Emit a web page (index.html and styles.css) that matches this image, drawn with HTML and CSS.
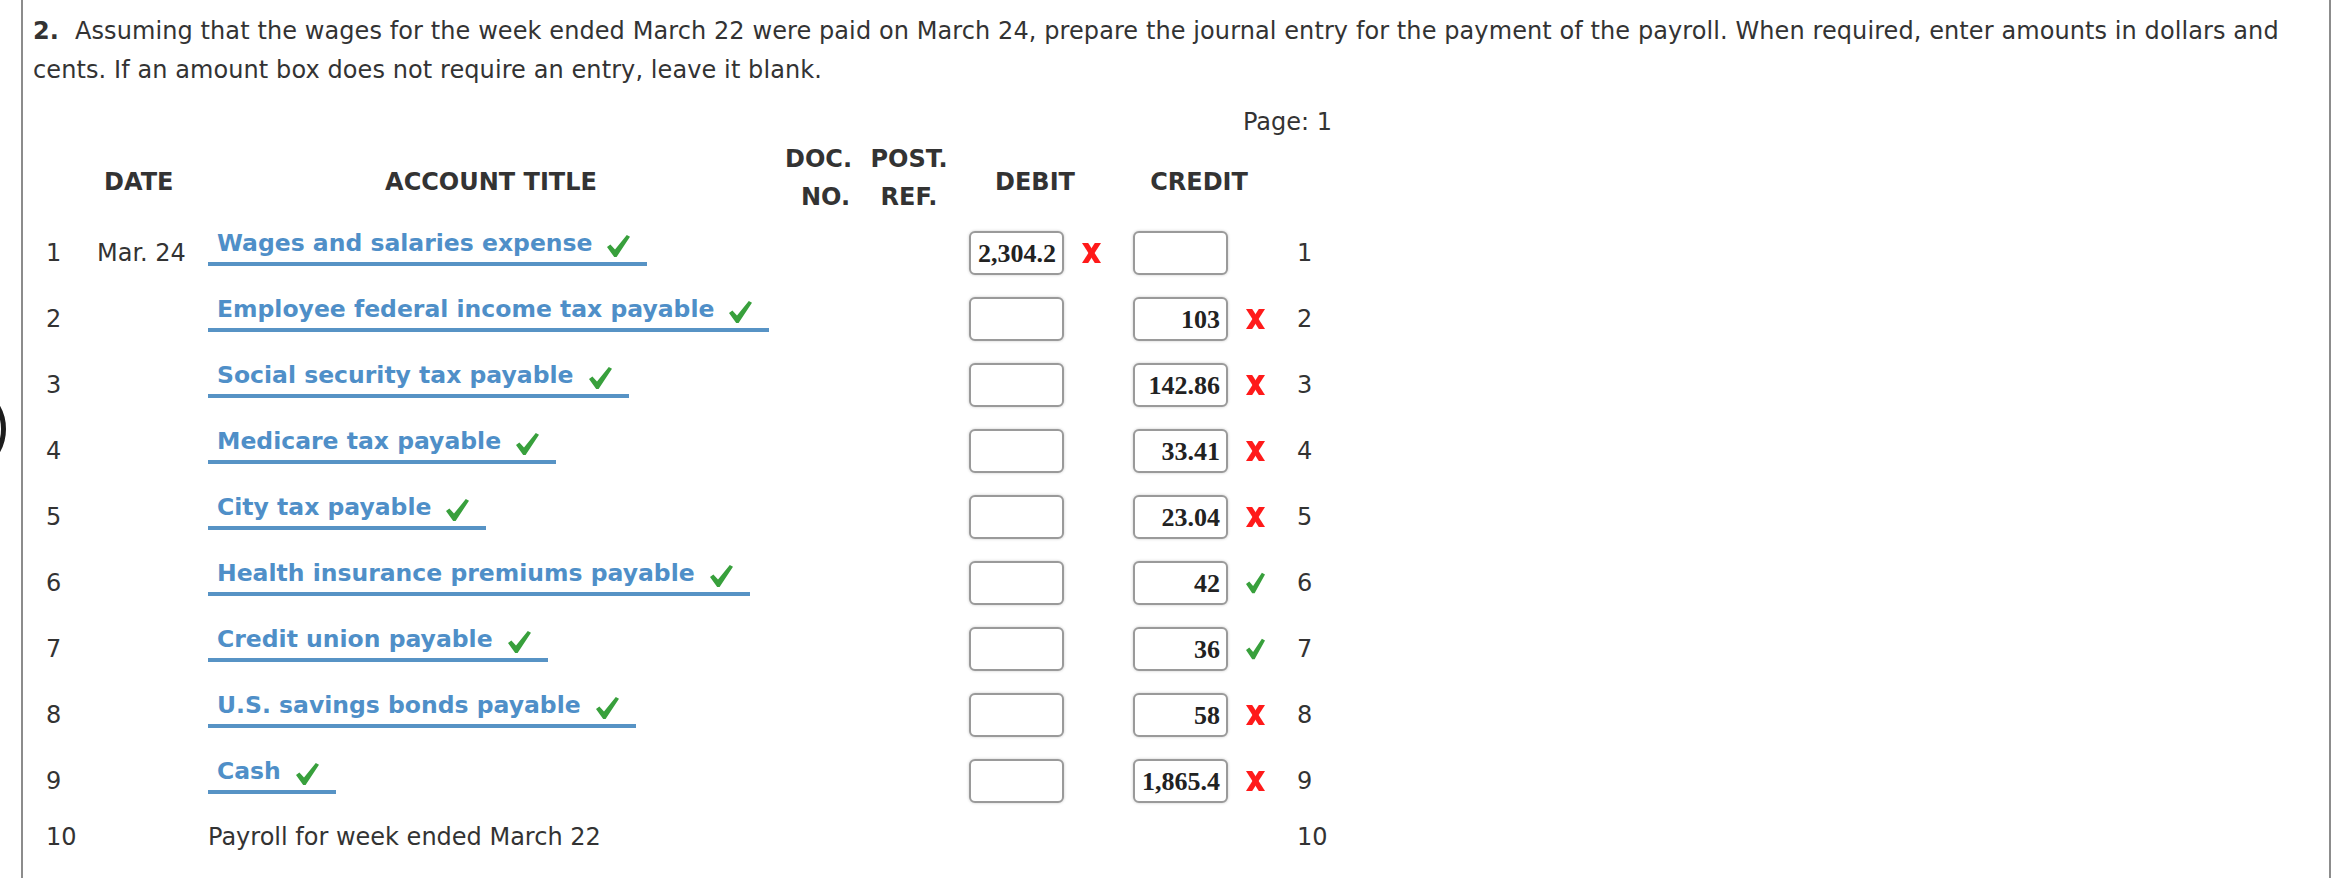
FILE: index.html
```html
<!DOCTYPE html>
<html lang="en">
<head>
<meta charset="utf-8">
<title>Journal entry</title>
<link rel="stylesheet" href="styles.css">
</head>
<body>
<div class="blob"></div>
<div class="panel">
  <p class="question"><b class="qnum">2.</b><span class="qtext">Assuming that the wages for the week ended March 22 were paid on March 24, prepare the journal entry for the payment of the payroll. When required, enter amounts in dollars and cents. If an amount box does not require an entry, leave it blank.</span></p>

  <div class="journal">
    <div class="page">Page: 1</div>

    <div class="head">
      <div class="c-num"></div>
      <div class="c-date h-single h-date">DATE</div>
      <div class="c-acct h-single h-acct">ACCOUNT TITLE</div>
      <div class="c-doc h-double h-doc">DOC.<br>NO.</div>
      <div class="c-post h-double h-post">POST.<br>REF.</div>
      <div class="c-debit h-single h-center">DEBIT</div>
      <div class="c-credit h-single h-center">CREDIT</div>
      <div class="c-rnum"></div>
    </div>

    <div class="row">
      <div class="c-num">1</div>
      <div class="c-date">Mar. 24</div>
      <div class="c-acct"><span class="acct">Wages and salaries expense<svg class="ok" viewBox="0 0 23 22"><path d="M0 12 L3.4 9.4 L8 14.6 L19.8 0 L23 1.8 L9.6 22 L7.2 22 Z"/></svg></span></div>
      <div class="c-doc"></div>
      <div class="c-post"></div>
      <div class="c-debit"><div class="amt">2,304.2</div><span class="mark"><svg class="bad" viewBox="0 0 19 20"><path d="M0 0 H6.2 L19 20 H12.8 Z"/><path d="M12.8 0 H19 L6.2 20 H0 Z"/></svg></span></div>
      <div class="c-credit"><div class="amt"></div><span class="mark"></span></div>
      <div class="c-rnum">1</div>
    </div>

    <div class="row">
      <div class="c-num">2</div>
      <div class="c-date"></div>
      <div class="c-acct"><span class="acct">Employee federal income tax payable<svg class="ok" viewBox="0 0 23 22"><path d="M0 12 L3.4 9.4 L8 14.6 L19.8 0 L23 1.8 L9.6 22 L7.2 22 Z"/></svg></span></div>
      <div class="c-doc"></div>
      <div class="c-post"></div>
      <div class="c-debit"><div class="amt"></div><span class="mark"></span></div>
      <div class="c-credit"><div class="amt">103</div><span class="mark"><svg class="bad" viewBox="0 0 19 20"><path d="M0 0 H6.2 L19 20 H12.8 Z"/><path d="M12.8 0 H19 L6.2 20 H0 Z"/></svg></span></div>
      <div class="c-rnum">2</div>
    </div>

    <div class="row">
      <div class="c-num">3</div>
      <div class="c-date"></div>
      <div class="c-acct"><span class="acct">Social security tax payable<svg class="ok" viewBox="0 0 23 22"><path d="M0 12 L3.4 9.4 L8 14.6 L19.8 0 L23 1.8 L9.6 22 L7.2 22 Z"/></svg></span></div>
      <div class="c-doc"></div>
      <div class="c-post"></div>
      <div class="c-debit"><div class="amt"></div><span class="mark"></span></div>
      <div class="c-credit"><div class="amt">142.86</div><span class="mark"><svg class="bad" viewBox="0 0 19 20"><path d="M0 0 H6.2 L19 20 H12.8 Z"/><path d="M12.8 0 H19 L6.2 20 H0 Z"/></svg></span></div>
      <div class="c-rnum">3</div>
    </div>

    <div class="row">
      <div class="c-num">4</div>
      <div class="c-date"></div>
      <div class="c-acct"><span class="acct">Medicare tax payable<svg class="ok" viewBox="0 0 23 22"><path d="M0 12 L3.4 9.4 L8 14.6 L19.8 0 L23 1.8 L9.6 22 L7.2 22 Z"/></svg></span></div>
      <div class="c-doc"></div>
      <div class="c-post"></div>
      <div class="c-debit"><div class="amt"></div><span class="mark"></span></div>
      <div class="c-credit"><div class="amt">33.41</div><span class="mark"><svg class="bad" viewBox="0 0 19 20"><path d="M0 0 H6.2 L19 20 H12.8 Z"/><path d="M12.8 0 H19 L6.2 20 H0 Z"/></svg></span></div>
      <div class="c-rnum">4</div>
    </div>

    <div class="row">
      <div class="c-num">5</div>
      <div class="c-date"></div>
      <div class="c-acct"><span class="acct">City tax payable<svg class="ok" viewBox="0 0 23 22"><path d="M0 12 L3.4 9.4 L8 14.6 L19.8 0 L23 1.8 L9.6 22 L7.2 22 Z"/></svg></span></div>
      <div class="c-doc"></div>
      <div class="c-post"></div>
      <div class="c-debit"><div class="amt"></div><span class="mark"></span></div>
      <div class="c-credit"><div class="amt">23.04</div><span class="mark"><svg class="bad" viewBox="0 0 19 20"><path d="M0 0 H6.2 L19 20 H12.8 Z"/><path d="M12.8 0 H19 L6.2 20 H0 Z"/></svg></span></div>
      <div class="c-rnum">5</div>
    </div>

    <div class="row">
      <div class="c-num">6</div>
      <div class="c-date"></div>
      <div class="c-acct"><span class="acct">Health insurance premiums payable<svg class="ok" viewBox="0 0 23 22"><path d="M0 12 L3.4 9.4 L8 14.6 L19.8 0 L23 1.8 L9.6 22 L7.2 22 Z"/></svg></span></div>
      <div class="c-doc"></div>
      <div class="c-post"></div>
      <div class="c-debit"><div class="amt"></div><span class="mark"></span></div>
      <div class="c-credit"><div class="amt">42</div><span class="mark"><svg class="ok2" viewBox="0 0 22 24"><path d="M0 13.2 L3.8 10.2 L8.2 15.6 L18.4 0 L22 2.2 L10 24 L7.2 24 Z"/></svg></span></div>
      <div class="c-rnum">6</div>
    </div>

    <div class="row">
      <div class="c-num">7</div>
      <div class="c-date"></div>
      <div class="c-acct"><span class="acct">Credit union payable<svg class="ok" viewBox="0 0 23 22"><path d="M0 12 L3.4 9.4 L8 14.6 L19.8 0 L23 1.8 L9.6 22 L7.2 22 Z"/></svg></span></div>
      <div class="c-doc"></div>
      <div class="c-post"></div>
      <div class="c-debit"><div class="amt"></div><span class="mark"></span></div>
      <div class="c-credit"><div class="amt">36</div><span class="mark"><svg class="ok2" viewBox="0 0 22 24"><path d="M0 13.2 L3.8 10.2 L8.2 15.6 L18.4 0 L22 2.2 L10 24 L7.2 24 Z"/></svg></span></div>
      <div class="c-rnum">7</div>
    </div>

    <div class="row">
      <div class="c-num">8</div>
      <div class="c-date"></div>
      <div class="c-acct"><span class="acct">U.S. savings bonds payable<svg class="ok" viewBox="0 0 23 22"><path d="M0 12 L3.4 9.4 L8 14.6 L19.8 0 L23 1.8 L9.6 22 L7.2 22 Z"/></svg></span></div>
      <div class="c-doc"></div>
      <div class="c-post"></div>
      <div class="c-debit"><div class="amt"></div><span class="mark"></span></div>
      <div class="c-credit"><div class="amt">58</div><span class="mark"><svg class="bad" viewBox="0 0 19 20"><path d="M0 0 H6.2 L19 20 H12.8 Z"/><path d="M12.8 0 H19 L6.2 20 H0 Z"/></svg></span></div>
      <div class="c-rnum">8</div>
    </div>

    <div class="row">
      <div class="c-num">9</div>
      <div class="c-date"></div>
      <div class="c-acct"><span class="acct">Cash<svg class="ok" viewBox="0 0 23 22"><path d="M0 12 L3.4 9.4 L8 14.6 L19.8 0 L23 1.8 L9.6 22 L7.2 22 Z"/></svg></span></div>
      <div class="c-doc"></div>
      <div class="c-post"></div>
      <div class="c-debit"><div class="amt"></div><span class="mark"></span></div>
      <div class="c-credit"><div class="amt">1,865.4</div><span class="mark"><svg class="bad" viewBox="0 0 19 20"><path d="M0 0 H6.2 L19 20 H12.8 Z"/><path d="M12.8 0 H19 L6.2 20 H0 Z"/></svg></span></div>
      <div class="c-rnum">9</div>
    </div>

    <div class="row row-last">
      <div class="c-num">10</div>
      <div class="c-date"></div>
      <div class="c-acct c-memo">Payroll for week ended March 22</div>
      <div class="c-doc"></div>
      <div class="c-post"></div>
      <div class="c-debit"></div>
      <div class="c-credit"></div>
      <div class="c-rnum">10</div>
    </div>
  </div>
</div>
</body>
</html>
```

FILE: styles.css
```css
html, body {
  margin: 0;
  padding: 0;
  background: #ffffff;
}

body {
  font-family: "DejaVu Sans", Verdana, sans-serif;
  font-size: 24px;
  color: #333333;
  overflow: hidden;
  position: relative;
  height: 878px;
}

.blob {
  position: absolute;
  left: -88px;
  top: 382px;
  width: 94px;
  height: 94px;
  box-sizing: border-box;
  border: 5px solid #1c1c1c;
  border-radius: 50%;
}

.panel {
  margin-left: 21px;
  width: 2310px;
  height: 878px;
  box-sizing: border-box;
  border-left: 2px solid #8c8c8c;
  border-right: 2px solid #8c8c8c;
  padding: 12px 10px 0 10px;
}

.question {
  margin: 0;
  font-size: 24px;
  line-height: 39px;
  letter-spacing: 0.09px;
  color: #333333;
}

.qnum {
  display: inline-block;
  margin-right: 16px;
}

.journal {
  margin-left: 13px;
  width: 1286px;
}

.page {
  margin-top: 17px;
  line-height: 30px;
  text-align: right;
}

.head {
  display: flex;
  align-items: center;
  margin-top: 9px;
  height: 72px;
  font-weight: bold;
}

.row {
  display: flex;
  align-items: center;
  height: 66px;
}

.head + .row {
  margin-top: 2px;
}

.row-last {
  height: 46px;
}

.c-num { width: 51px; flex: none; }
.c-date { width: 111px; flex: none; }
.c-acct { width: 577px; flex: none; }
.c-doc { width: 75px; flex: none; }
.c-post { width: 98px; flex: none; }
.c-debit {
  width: 157px;
  flex: none;
  box-sizing: border-box;
  padding-left: 11px;
  padding-right: 14px;
  display: flex;
  align-items: center;
}
.c-credit {
  width: 182px;
  flex: none;
  box-sizing: border-box;
  padding-left: 18px;
  padding-right: 32px;
  display: flex;
  align-items: center;
}
.c-rnum { flex: 1; }

.h-single {
  line-height: 36px;
}

.h-double {
  line-height: 38px;
  padding-bottom: 9px;
}

.h-date {
  padding-left: 7px;
  box-sizing: border-box;
}

.h-acct {
  text-align: center;
  padding-right: 11px;
  box-sizing: border-box;
}

.h-doc {
  text-align: right;
  padding-right: 10px;
  box-sizing: border-box;
}

.h-post {
  text-align: center;
}

.h-center {
  justify-content: center;
}

.row .c-acct {
  align-self: flex-start;
  padding-top: 8px;
}

.row .c-memo {
  align-self: center;
  padding-top: 0;
  line-height: 30px;
}

.acct {
  display: inline-flex;
  align-items: flex-start;
  font-weight: bold;
  font-size: 23.5px;
  line-height: 30px;
  color: #4f8fc8;
  padding: 0 17px 4px 9px;
  border-bottom: 4px solid #5793c5;
}

.ok {
  width: 23px;
  height: 22px;
  margin-left: 15px;
  margin-top: 7px;
  fill: #38a03c;
  flex: none;
}

.ok2 {
  width: 22px;
  height: 24px;
  fill: #38a03c;
}

.amt {
  width: 95px;
  height: 44px;
  flex: none;
  box-sizing: border-box;
  border: 2px solid #9a9a9a;
  border-radius: 6px;
  box-shadow: 0 0 3px rgba(0, 0, 0, 0.22);
  background: #ffffff;
  font-family: "Liberation Serif", "Times New Roman", serif;
  font-weight: bold;
  font-size: 26px;
  line-height: 41px;
  color: #222222;
  text-align: right;
  padding-right: 6px;
  white-space: nowrap;
  overflow: hidden;
}

.mark {
  width: 19px;
  height: 24px;
  margin-left: 18px;
  flex: none;
  display: flex;
  align-items: center;
  justify-content: center;
}

.bad {
  width: 19px;
  height: 20px;
  fill: #ff1a1a;
}
```
